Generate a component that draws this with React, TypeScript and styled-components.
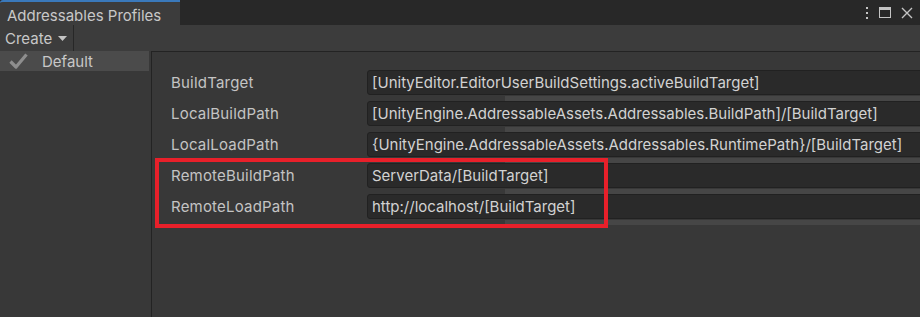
import styled, { createGlobalStyle } from "styled-components";

const GlobalStyle = createGlobalStyle`
  html, body {
    margin: 0;
    padding: 0;
    background: #383838;
  }

  body {
    font-family: Inter, "Noto Sans", "Liberation Sans", sans-serif;
    font-size: 15px;
  }
`;

type Profile = {
  name: string;
  value: string;
};

const PROFILE_VARIABLES: Profile[] = [
  { name: "BuildTarget", value: "[UnityEditor.EditorUserBuildSettings.activeBuildTarget]" },
  { name: "LocalBuildPath", value: "[UnityEngine.AddressableAssets.Addressables.BuildPath]/[BuildTarget]" },
  { name: "LocalLoadPath", value: "{UnityEngine.AddressableAssets.Addressables.RuntimePath}/[BuildTarget]" },
  { name: "RemoteBuildPath", value: "ServerData/[BuildTarget]" },
  { name: "RemoteLoadPath", value: "http://localhost/[BuildTarget]" },
];

const App = () => {
  return (
    <>
      <GlobalStyle />
      <Window>
        <TitleBar>
          <Tab>Addressables Profiles</Tab>
          <TitleActions>
            <svg width="4" height="12" viewBox="0 0 4 12">
              <rect x="1" y="0" width="2" height="2" fill="#c4c4c4" />
              <rect x="1" y="5" width="2" height="2" fill="#c4c4c4" />
              <rect x="1" y="10" width="2" height="2" fill="#c4c4c4" />
            </svg>
            <svg width="12" height="11" viewBox="0 0 12 11">
              <rect x="0.5" y="0.5" width="11" height="10" fill="none" stroke="#c4c4c4" />
              <rect x="0" y="0" width="12" height="3" fill="#c4c4c4" />
            </svg>
            <svg width="12" height="12" viewBox="0 0 12 12">
              <path d="M1 1 L11 11 M11 1 L1 11" stroke="#c4c4c4" strokeWidth="1.4" />
            </svg>
          </TitleActions>
        </TitleBar>

        <Toolbar>
          <CreateButton>
            Create
            <svg width="9" height="5" viewBox="0 0 9 5">
              <path d="M0 0 H9 L4.5 5 Z" fill="#c4c4c4" />
            </svg>
          </CreateButton>
        </Toolbar>

        <Body>
          <Sidebar>
            <ProfileItem $selected>
              <svg width="19" height="16" viewBox="0 0 19 16">
                <path d="M1.5 8.5 L7 14 L17.5 1.5" fill="none" stroke="#8e8e8e" strokeWidth="3.2" strokeLinejoin="round" />
              </svg>
              Default
            </ProfileItem>
          </Sidebar>

          <Content>
            {PROFILE_VARIABLES.map((variable) => (
              <VariableRow key={variable.name}>
                <VariableName>{variable.name}</VariableName>
                <ValueCell>
                  <ValueField>{variable.value}</ValueField>
                  <FieldTrack />
                </ValueCell>
              </VariableRow>
            ))}
            <Highlight />
          </Content>
        </Body>
      </Window>
    </>
  );
};

export default App;

const Window = styled.div`
  width: 920px;
  height: 317px;

  display: flex;
  flex-direction: column;

  background-color: #383838;
  color: #c4c4c4;
  overflow: hidden;
`;

const TitleBar = styled.div`
  height: 25px;

  display: flex;
  align-items: stretch;
  justify-content: space-between;

  background-color: #282828;
  flex-shrink: 0;
`;

const Tab = styled.div`
  width: 173px;
  padding: 3px 0 0 7px;
  border-top: 2px solid #3a79bb;
  border-top-left-radius: 3px;

  display: flex;
  align-items: center;

  background-color: #3c3c3c;
  color: #c8c8c8;
  font-size: 15px;
`;

const TitleActions = styled.div`
  padding-right: 7px;

  display: flex;
  align-items: center;
  gap: 10px;
`;

const Toolbar = styled.div`
  height: 26px;

  display: flex;
  align-items: stretch;

  background-color: #3c3c3c;
  flex-shrink: 0;
`;

const CreateButton = styled.div`
  width: 68px;
  padding-left: 5px;
  border-right: 1px solid #272727;

  display: flex;
  align-items: center;
  gap: 6px;

  color: #c8c8c8;
  font-size: 15px;
`;

const Body = styled.div`
  flex: 1;

  display: flex;
`;

const Sidebar = styled.div`
  width: 151px;
  padding-right: 2px;
  box-sizing: border-box;

  display: flex;
  flex-direction: column;

  background-color: #383838;
`;

const ProfileItem = styled.div<{ $selected?: boolean }>`
  height: 20px;
  padding-left: 9px;

  display: flex;
  align-items: center;
  gap: 14px;

  background-color: ${({ $selected }) => ($selected ? "#4b4b4b" : "transparent")};
  color: #c8c8c8;
  font-size: 15px;
`;

const Content = styled.div`
  flex: 1;
  padding: 18px 0 0 19px;
  border-left: 1px solid #232323;
  border-top: 1px solid #232323;

  display: flex;
  flex-direction: column;

  position: relative;
  overflow: hidden;
`;

const VariableRow = styled.div`
  display: grid;
  grid-template-columns: 196px 1fr;
  align-items: start;
`;

const VariableName = styled.div`
  height: 25px;

  display: flex;
  align-items: center;

  color: #c4c4c4;
  font-size: 15px;
  letter-spacing: 0.2px;
  white-space: nowrap;
`;

const ValueCell = styled.div`
  margin-right: -6px;

  display: flex;
  flex-direction: column;
`;

const ValueField = styled.div`
  height: 25px;
  padding-left: 4px;
  border: 1px solid #212121;
  border-radius: 3px;
  box-sizing: border-box;

  display: flex;
  align-items: center;

  background-color: #2a2a2a;
  color: #d2d2d2;
  font-size: 15px;
  white-space: nowrap;
`;

const FieldTrack = styled.div`
  height: 6px;
  margin-left: 138px;
  border-top: 1px solid #383838;
  box-sizing: border-box;

  background-color: #464646;
`;

const Highlight = styled.div`
  width: 445px;
  height: 62px;
  border: 4px solid #e8202a;

  position: absolute;
  top: 106px;
  left: 3px;
  pointer-events: none;
`;
